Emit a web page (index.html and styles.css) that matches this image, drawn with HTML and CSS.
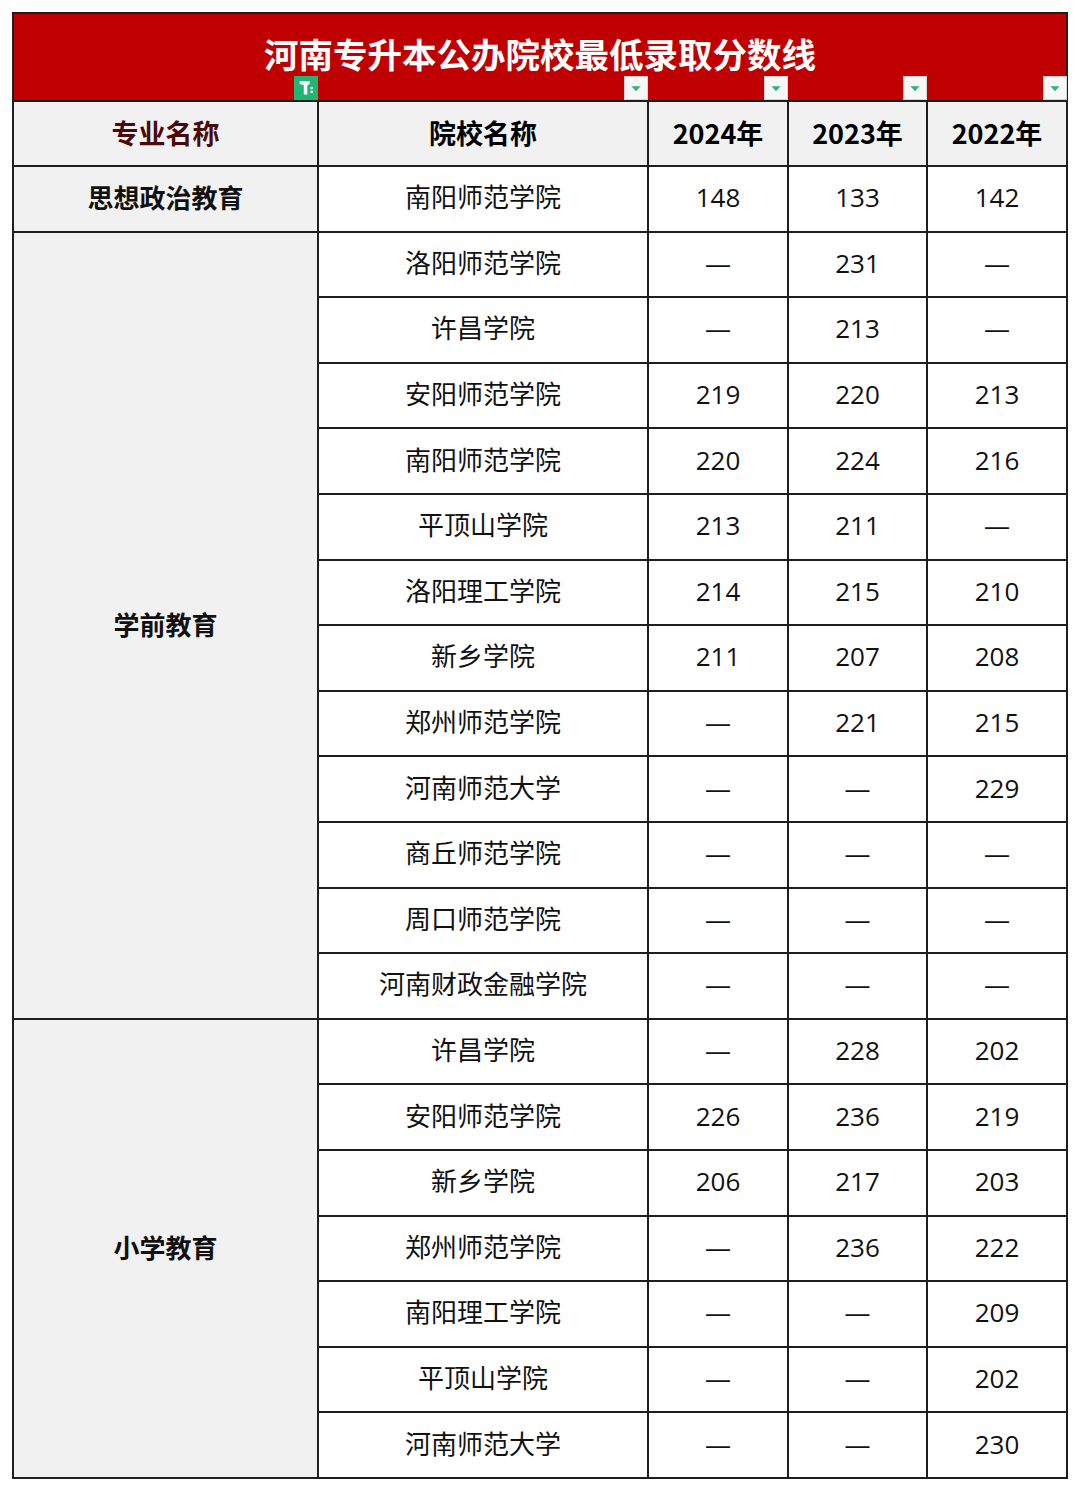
FILE: index.html
```html
<!DOCTYPE html>
<html lang="zh-CN">
<head>
<meta charset="utf-8">
<title>河南专升本公办院校最低录取分数线</title>
<link rel="stylesheet" href="styles.css">
</head>
<body>
<table class="score-table">
  <colgroup>
    <col class="c-major">
    <col class="c-school">
    <col class="c-year">
    <col class="c-year2">
    <col class="c-year">
  </colgroup>
  <thead>
    <tr class="title-row">
      <th colspan="5" class="title-cell">
        <span class="title-text">河南专升本公办院校最低录取分数线</span>
        <span class="filter filter-active f1"><svg viewBox="0 0 24 24"><path d="M5 4.5h11v3.2l-2.6 1.3V19h-3.8V9L5 7.7z" fill="#fff"/><rect x="17" y="11" width="2.4" height="2.4" fill="#fff"/><rect x="17" y="15" width="2.4" height="2.4" fill="#fff"/></svg></span>
        <span class="filter f2"><svg viewBox="0 0 24 24"><path d="M7 10h10l-5 5.5z" fill="#2bb673"/></svg></span>
        <span class="filter f3"><svg viewBox="0 0 24 24"><path d="M7 10h10l-5 5.5z" fill="#2bb673"/></svg></span>
        <span class="filter f4"><svg viewBox="0 0 24 24"><path d="M7 10h10l-5 5.5z" fill="#2bb673"/></svg></span>
        <span class="filter f5"><svg viewBox="0 0 24 24"><path d="M7 10h10l-5 5.5z" fill="#2bb673"/></svg></span>
      </th>
    </tr>
    <tr class="head-row">
      <th class="major-head">专业名称</th>
      <th>院校名称</th>
      <th>2024年</th>
      <th>2023年</th>
      <th>2022年</th>
    </tr>
  </thead>
  <tbody>
    <tr><td class="major">思想政治教育</td><td>南阳师范学院</td><td>148</td><td>133</td><td>142</td></tr>
    <tr><td class="major" rowspan="12">学前教育</td><td>洛阳师范学院</td><td>—</td><td>231</td><td>—</td></tr>
    <tr><td>许昌学院</td><td>—</td><td>213</td><td>—</td></tr>
    <tr><td>安阳师范学院</td><td>219</td><td>220</td><td>213</td></tr>
    <tr><td>南阳师范学院</td><td>220</td><td>224</td><td>216</td></tr>
    <tr><td>平顶山学院</td><td>213</td><td>211</td><td>—</td></tr>
    <tr><td>洛阳理工学院</td><td>214</td><td>215</td><td>210</td></tr>
    <tr><td>新乡学院</td><td>211</td><td>207</td><td>208</td></tr>
    <tr><td>郑州师范学院</td><td>—</td><td>221</td><td>215</td></tr>
    <tr><td>河南师范大学</td><td>—</td><td>—</td><td>229</td></tr>
    <tr><td>商丘师范学院</td><td>—</td><td>—</td><td>—</td></tr>
    <tr><td>周口师范学院</td><td>—</td><td>—</td><td>—</td></tr>
    <tr><td>河南财政金融学院</td><td>—</td><td>—</td><td>—</td></tr>
    <tr><td class="major" rowspan="7">小学教育</td><td>许昌学院</td><td>—</td><td>228</td><td>202</td></tr>
    <tr><td>安阳师范学院</td><td>226</td><td>236</td><td>219</td></tr>
    <tr><td>新乡学院</td><td>206</td><td>217</td><td>203</td></tr>
    <tr><td>郑州师范学院</td><td>—</td><td>236</td><td>222</td></tr>
    <tr><td>南阳理工学院</td><td>—</td><td>—</td><td>209</td></tr>
    <tr><td>平顶山学院</td><td>—</td><td>—</td><td>202</td></tr>
    <tr><td>河南师范大学</td><td>—</td><td>—</td><td>230</td></tr>
  </tbody>
</table>
</body>
</html>
```
FILE: styles.css
```css
html, body {
  margin: 0;
  padding: 0;
  background: #ffffff;
}
body {
  padding: 12px 0 0 12px;
  font-family: "Open Sans", "Noto Sans CJK SC", sans-serif;
  color: #111;
}
.score-table {
  border-collapse: collapse;
  table-layout: fixed;
  width: 1054px;
}
.c-major { width: 305px; }
.c-school { width: 330px; }
.c-year { width: 140px; }
.c-year2 { width: 139px; }
.score-table th,
.score-table td {
  border: 2px solid #1e1e1e;
  text-align: center;
  vertical-align: middle;
  padding: 0;
  font-size: 26px;
  line-height: 1;
}
.score-table td {
  height: 60.6px;
  font-weight: 400;
  font-family: "Open Sans", "Noto Sans CJK SC", sans-serif;
  color: #111;
  padding-bottom: 3px;
}
.score-table td.major {
  background: #f1f1f1;
  font-weight: 700;
  font-family: "Noto Sans CJK SC", sans-serif;
}
.title-row .title-cell {
  height: 86px;
  background: #c00000;
  position: relative;
  padding: 0;
}
.title-text {
  display: block;
  color: #ffffff;
  font-family: "Noto Sans CJK SC", sans-serif;
  font-weight: 700;
  font-size: 34.5px;
  line-height: 1;
  margin-top: -8px;
}
.head-row th {
  height: 60px;
  background: #f1f1f1;
  font-family: "Noto Sans CJK SC", sans-serif;
  font-weight: 700;
  font-size: 27px;
  color: #000;
  padding-bottom: 3px;
}
.head-row th.major-head {
  color: #4a0a0a;
}
.filter {
  position: absolute;
  bottom: 0;
  width: 24px;
  height: 24px;
  background: #f7f7f7;
  border: 1px solid #d6d6d6;
  box-sizing: border-box;
  display: flex;
  align-items: center;
  justify-content: center;
}
.filter svg { display: block; width: 22px; height: 22px; }
.filter-active {
  background: #22b573;
  border-color: #22b573;
}
.f1 { left: 280px; }
.f2 { left: 610px; }
.f3 { left: 750px; }
.f4 { left: 889px; }
.f5 { left: 1029px; }
```
